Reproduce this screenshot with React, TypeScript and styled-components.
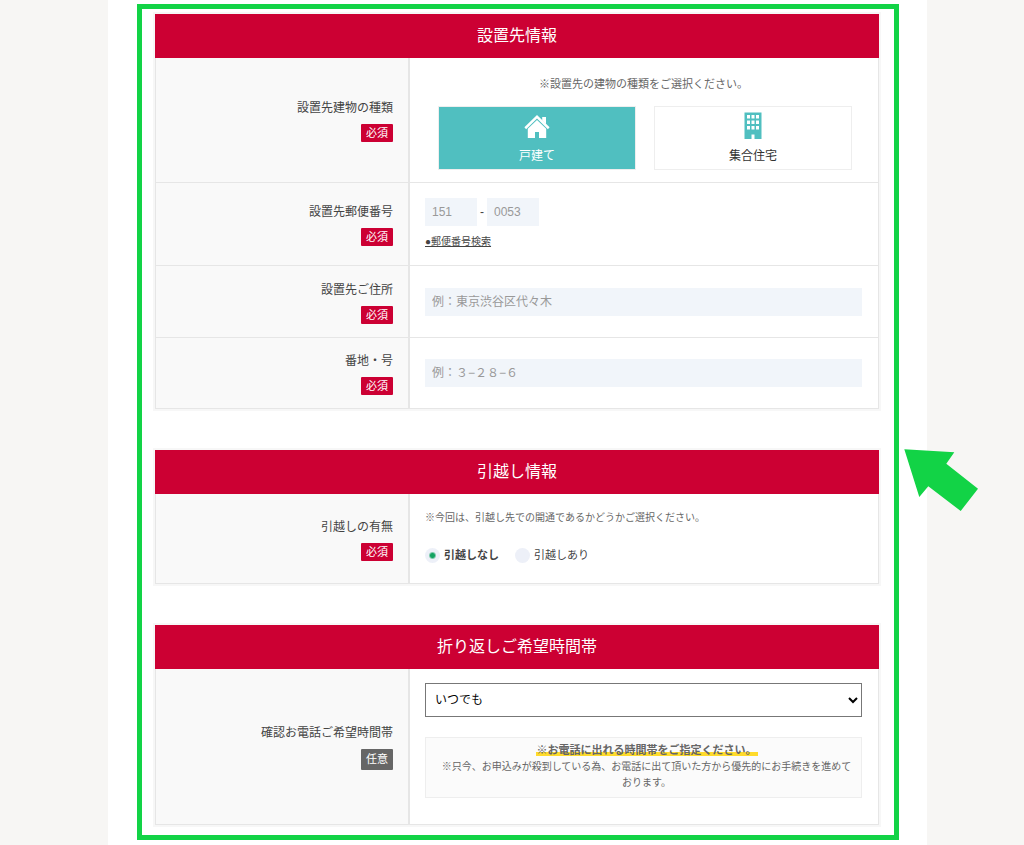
import React from 'react';
import styled, { createGlobalStyle } from 'styled-components';

const red = '#cc0033';
const teal = '#50bfc0';
const green = '#12d346';
const line = '#e6e6e6';

const GlobalStyle = createGlobalStyle`
  * { box-sizing: border-box; }
  body {
    margin: 0;
    background: #f7f6f4;
    color: #444;
    font-family: "Liberation Sans", "Noto Sans CJK JP", sans-serif;
    font-size: 12px;
    line-height: 20px;
  }
  input, select, button { font-family: inherit; }
`;

const Page = styled.main`
  display: flow-root;
  min-height: 100vh;
  margin: 0 97px 0 108px;
  padding: 4px 28px 5px 29px;
  background: #fff;
`;

const Frame = styled.form`
  position: relative;
  display: flex;
  flex-direction: column;
  gap: 41px;
  padding: 5px 15px 10px 13px;
  border: 5px solid ${green};
`;

const Arrow = styled.svg`
  position: absolute;
  top: 440px;
  left: calc(100% + 10px);
`;

const Section = styled.section`
  box-shadow: 0 0 0 2px #f7f7f7;
`;

const Heading = styled.h2`
  margin: 0;
  padding: 10px;
  background: ${red};
  color: #fff;
  font-size: 16px;
  font-weight: 400;
  line-height: 24px;
  text-align: center;
`;

const Rows = styled.div`
  border: solid ${line};
  border-width: 0 1px;
`;

const Row = styled.div`
  display: grid;
  grid-template-columns: 254fr 468fr;
  border-bottom: 1px solid ${line};
`;

const LabelCell = styled.div`
  display: flex;
  flex-direction: column;
  justify-content: center;
  align-items: flex-end;
  gap: 6px;
  padding: 0 15px;
  border-right: 2px solid ${line};
  background: #f9f9f9;
`;

const Badge = styled.span<{ $optional?: boolean }>`
  padding: 0 5px;
  border-radius: 1px;
  background: ${(p) => (p.$optional ? '#666' : red)};
  color: #fff;
  font-size: 11px;
  line-height: ${(p) => (p.$optional ? 21 : 18)}px;
`;

const Field = styled.div<{ $top: number; $bottom: number }>`
  padding: ${(p) => p.$top}px 16px ${(p) => p.$bottom}px 15px;
`;

const Note = styled.p<{ $centered?: boolean }>`
  margin: 0;
  color: #666;
  font-size: ${(p) => (p.$centered ? 11 : 10)}px;
  line-height: 16px;
  text-align: ${(p) => (p.$centered ? 'center' : 'left')};
`;

const Tiles = styled.div`
  display: grid;
  grid-template-columns: 1fr 1fr;
  gap: 18px;
  padding: 14px 10px 0 13px;
`;

const Tile = styled.label`
  position: relative;
  display: flex;
  flex-direction: column;
  align-items: center;
  height: 64px;
  padding-top: 5px;
  border: 1px solid #eee;
  color: #333;
  cursor: pointer;

  svg { fill: ${teal}; }

  &:has(input:checked) {
    background: ${teal};
    color: #fff;
    svg { fill: #fff; }
  }
`;

const TileInput = styled.input`
  position: absolute;
  inset: 0;
  width: 100%;
  height: 100%;
  margin: 0;
  opacity: 0;
  cursor: pointer;
`;

const TileIcon = styled.svg`
  flex: none;
  margin-bottom: 6px;
`;

const ZipLine = styled.div`
  display: flex;
  align-items: center;
  gap: 3px;
  margin-bottom: 8px;
`;

const TextInput = styled.input`
  display: block;
  width: 100%;
  height: 28px;
  padding: 0 7px;
  border: 0;
  background: #f1f5fa;
  color: #333;
  font-size: 12px;
  &::placeholder { color: #999; }
`;

const ZipInput = styled(TextInput)`
  width: 52px;
`;

const ZipLink = styled.a`
  display: block;
  width: fit-content;
  color: #444;
  font-size: 10px;
  line-height: 16px;
`;

const Radios = styled.div`
  display: flex;
  gap: 16px;
  margin-top: 21px;
`;

const RadioLabel = styled.label`
  display: flex;
  align-items: center;
  gap: 4px;
  color: #444;
  font-size: 11px;
  line-height: 16px;

  &:has(input:checked) { font-weight: 700; }
`;

const Radio = styled.input`
  appearance: none;
  width: 15px;
  height: 15px;
  margin: 0;
  border-radius: 50%;
  background: #edf0f8;

  &:checked { background: radial-gradient(circle, #15a362 2px, #edf0f8 4px); }
`;

const Select = styled.select`
  display: block;
  width: 100%;
  height: 34px;
  padding: 0 0 0 5px;
  border: 1px solid #777;
  border-radius: 0;
  background: #fff;
  color: #000;
  font-size: 12px;
`;

const Notice = styled.div`
  margin-top: 20px;
  padding: 4px 8px 6px 14px;
  border: 1px solid #eee;
  background: #fbfbfb;
  color: #666;
  font-size: 10px;
  line-height: 16px;
  text-align: center;
`;

const Marked = styled.strong`
  padding: 0 1px;
  background: linear-gradient(transparent 70%, #ffdb2b 70%);
  font-size: 11px;
`;

function LabelBlock({ text, htmlFor, id, optional }: { text: string; htmlFor?: string; id?: string; optional?: boolean }) {
  return (
    <LabelCell>
      {htmlFor ? <label htmlFor={htmlFor}>{text}</label> : <span id={id}>{text}</span>}
      <Badge $optional={optional}>{optional ? '任意' : '必須'}</Badge>
    </LabelCell>
  );
}

const HouseIcon = () => (
  <TileIcon width="26" height="28" viewBox="0 0 26 28" aria-hidden="true">
    <path d="M13 3 25.600 15.300 23.900 17.200 13 6.600 2.100 17.200.4 15.300Z" />
    <path d="M18.200 5h3.800v7.200l-3.800-3.700Z" />
    <path d="M13 7.900 22.200 16.800V26H15v-6h-4v6H3.800V16.800Z" />
  </TileIcon>
);

const BuildingIcon = () => (
  <TileIcon width="18" height="28" viewBox="0 0 18 28" aria-hidden="true">
    <path
      fillRule="evenodd"
      d="M.5 .5h17v26.500h-7v-4.500h-3v4.500h-7ZM3 3v3.500h3v-3.500ZM7.500 3v3.500h3v-3.500ZM12 3v3.500h3v-3.500ZM3 8.500v3.500h3v-3.500ZM7.500 8.500v3.500h3v-3.500ZM12 8.500v3.500h3v-3.500ZM3 14v3.500h3v-3.500ZM7.500 14v3.500h3v-3.500ZM12 14v3.500h3v-3.500Z"
    />
  </TileIcon>
);

export default function App() {
  return (
    <>
      <GlobalStyle />
      <Page>
        <Frame>
          <Section>
            <Heading>設置先情報</Heading>
            <Rows>
              <Row role="radiogroup" aria-labelledby="building">
                <LabelBlock id="building" text="設置先建物の種類" />
                <Field $top={18} $bottom={12}>
                  <Note $centered>※設置先の建物の種類をご選択ください。</Note>
                  <Tiles>
                    <Tile>
                      <TileInput type="radio" name="building" defaultChecked />
                      <HouseIcon />
                      戸建て
                    </Tile>
                    <Tile>
                      <TileInput type="radio" name="building" />
                      <BuildingIcon />
                      集合住宅
                    </Tile>
                  </Tiles>
                </Field>
              </Row>
              <Row>
                <LabelBlock htmlFor="zip1" text="設置先郵便番号" />
                <Field $top={15} $bottom={15}>
                  <ZipLine>
                    <ZipInput id="zip1" placeholder="151" />
                    <span>-</span>
                    <ZipInput aria-label="郵便番号（下4桁）" placeholder="0053" />
                  </ZipLine>
                  <ZipLink href="#zip">●郵便番号検索</ZipLink>
                </Field>
              </Row>
              <Row>
                <LabelBlock htmlFor="address" text="設置先ご住所" />
                <Field $top={22} $bottom={21}>
                  <TextInput id="address" placeholder="例：東京渋谷区代々木" />
                </Field>
              </Row>
              <Row>
                <LabelBlock htmlFor="street" text="番地・号" />
                <Field $top={21} $bottom={21}>
                  <TextInput id="street" placeholder="例：３−２８−６" />
                </Field>
              </Row>
            </Rows>
          </Section>

          <Section>
            <Heading>引越し情報</Heading>
            <Rows>
              <Row role="radiogroup" aria-labelledby="moving">
                <LabelBlock id="moving" text="引越しの有無" />
                <Field $top={16} $bottom={20}>
                  <Note>※今回は、引越し先での開通であるかどうかご選択ください。</Note>
                  <Radios>
                    <RadioLabel>
                      <Radio type="radio" name="moving" defaultChecked />
                      引越しなし
                    </RadioLabel>
                    <RadioLabel>
                      <Radio type="radio" name="moving" />
                      引越しあり
                    </RadioLabel>
                  </Radios>
                </Field>
              </Row>
            </Rows>
          </Section>

          <Section>
            <Heading>折り返しご希望時間帯</Heading>
            <Rows>
              <Row>
                <LabelBlock htmlFor="time" text="確認お電話ご希望時間帯" optional />
                <Field $top={14} $bottom={26}>
                  <Select id="time">
                    <option>いつでも</option>
                  </Select>
                  <Notice>
                    <Marked>※お電話に出れる時間帯をご指定ください。</Marked>
                    <br />
                    ※只今、お申込みが殺到している為、お電話に出て頂いた方から優先的にお手続きを進めております。
                  </Notice>
                </Field>
              </Row>
            </Rows>
          </Section>

          <Arrow width="74" height="62" viewBox="0 0 74 62" aria-hidden="true">
            <path fill={green} d="M.3.3 50.300 3.300 42.300 14.700 74 39.700 56.700 62 24.300 37.300 15.300 48Z" />
          </Arrow>
        </Frame>
      </Page>
    </>
  );
}
